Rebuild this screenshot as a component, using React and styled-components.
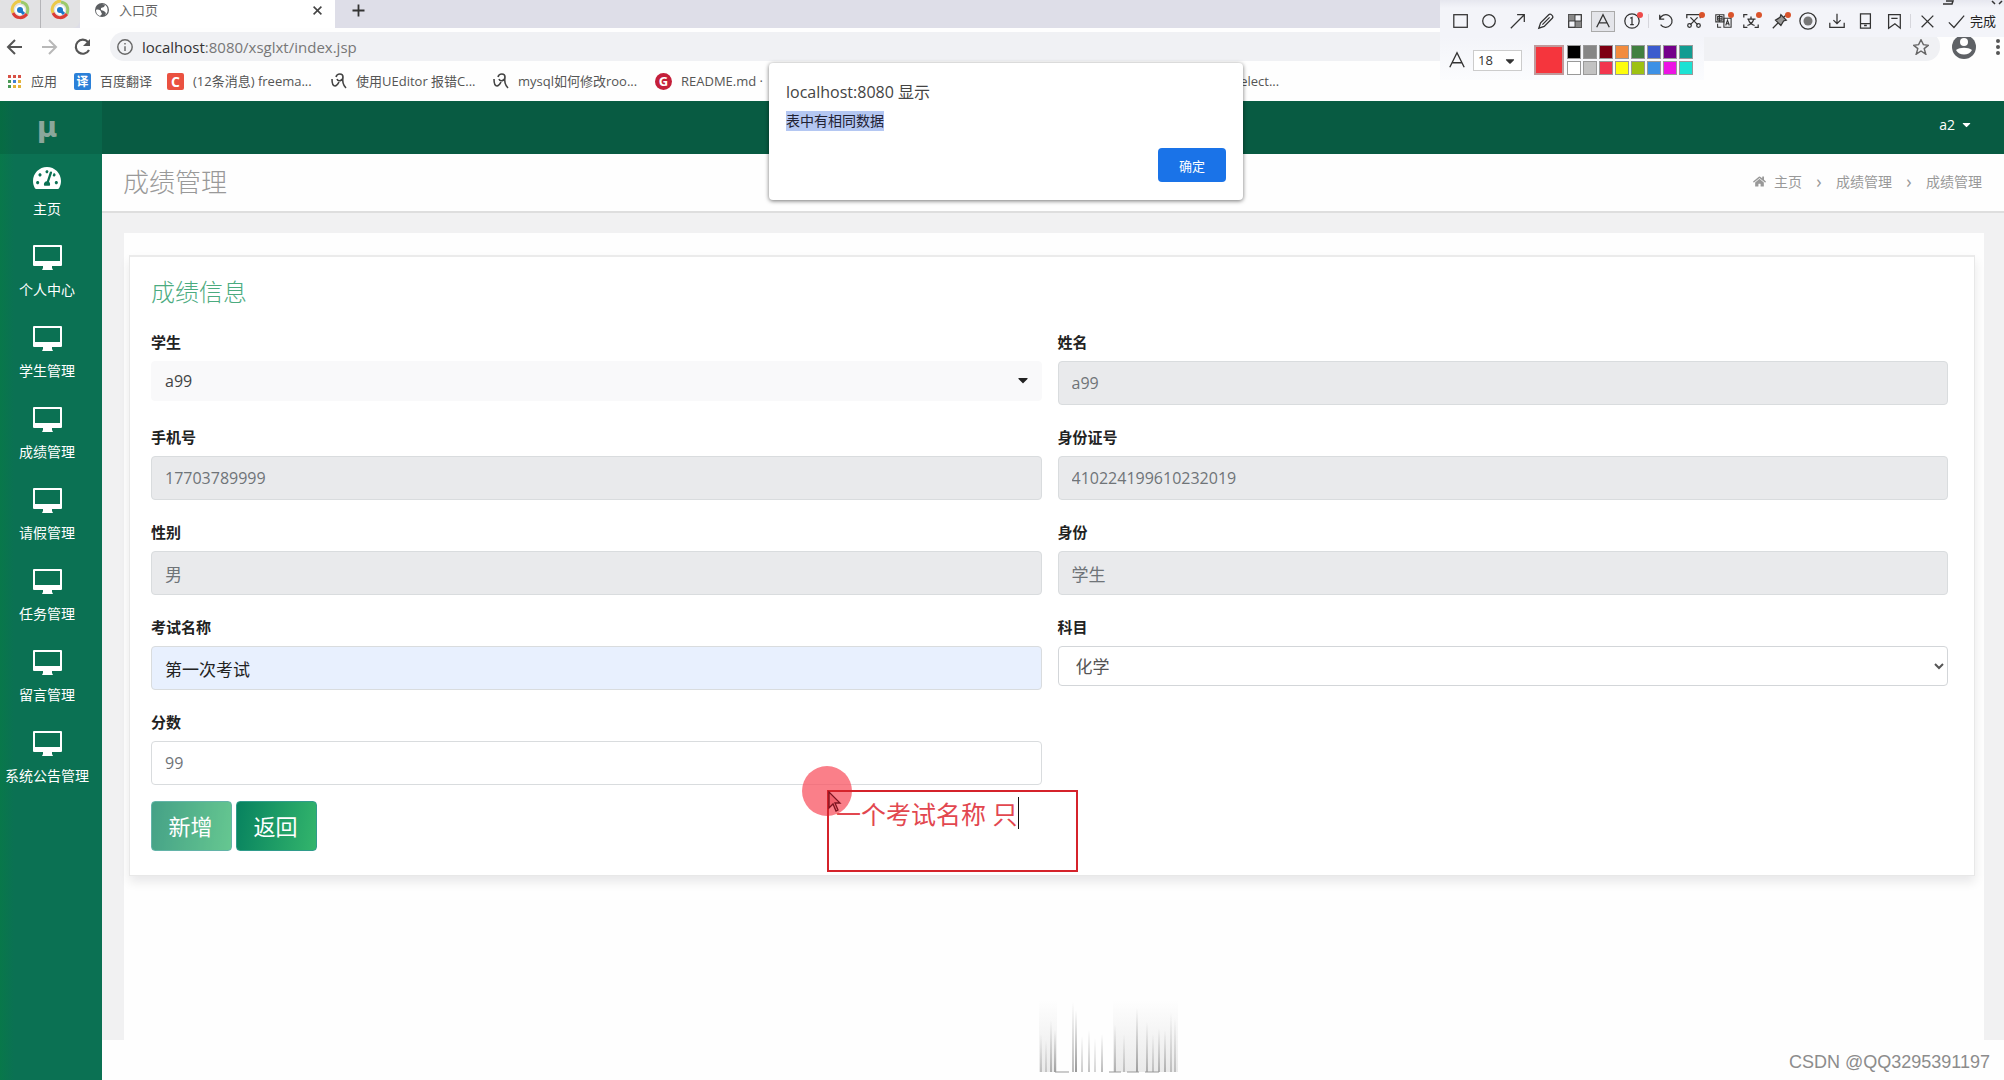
import styled, { createGlobalStyle } from "styled-components";
import { FaTachometerAlt, FaHome, FaCaretDown } from "react-icons/fa";

const GlobalStyle = createGlobalStyle`
  * {
    box-sizing: border-box;
  }
  body {
    margin: 0;
    background: #fefefe;
    font-family: "Open Sans", "Noto Sans CJK SC", sans-serif;
    font-size: 14px;
    color: #333;
  }
  button, input, select {
    font-family: inherit;
  }
  a {
    color: inherit;
    text-decoration: none;
  }
`;

const Page = styled.div`
  position: relative;
  min-height: 100vh;
  display: flex;
  flex-direction: column;
  overflow: hidden;
`;

/* browser */

const TabStrip = styled.div`
  height: 28px;
  display: flex;
  background: #dedee8;
`;

const PinnedTabs = styled.div`
  width: 80px;
  display: flex;
  background: #e2e2e4;
  border-radius: 0 0 8px 0;
`;

const PinnedTab = styled.button`
  flex: 1;
  border: 0;
  padding: 0 0 8px;
  background: none;
  display: flex;
  align-items: center;
  justify-content: center;
  & + & {
    border-left: 1px solid #b5b5b8;
  }
`;

const ActiveTab = styled.div`
  width: 255px;
  padding: 0 11px 8px 14px;
  display: flex;
  align-items: center;
  gap: 9px;
  background: #fff;
  font-size: 13px;
  line-height: 18px;
  color: #666;
`;

const TabTitle = styled.span`
  flex: 1;
`;

const IconButton = styled.button`
  border: 0;
  padding: 0;
  background: none;
  display: flex;
  align-items: center;
  justify-content: center;
`;

const NewTab = styled(IconButton)`
  width: 46px;
  padding-bottom: 8px;
`;

const AddressRow = styled.div`
  margin-top: 4px;
  height: 29px;
  display: flex;
  align-items: center;
  padding: 0 4px;
`;

const NavButtons = styled.div`
  display: flex;
  gap: 12px;
  width: 106px;
  button {
    width: 22px;
  }
`;

const AddressBar = styled.div`
  flex: 1;
  height: 29px;
  padding: 0 11px 0 7px;
  display: flex;
  align-items: center;
  gap: 9px;
  background: #f0f1f4;
  border-radius: 14px;
  font-size: 15px;
  line-height: 20px;
  color: #777;
  b {
    font-weight: 400;
    color: #333;
  }
`;

const Url = styled.span`
  flex: 1;
`;

const Profile = styled.div`
  width: 60px;
  display: flex;
  align-items: center;
  justify-content: flex-end;
  gap: 20px;
`;

const Bookmarks = styled.nav`
  height: 40px;
  padding-left: 7px;
  display: flex;
  align-items: center;
  white-space: nowrap;
  font-size: 13px;
  line-height: 20px;
  color: #555;
`;

const Bookmark = styled.a`
  width: ${(props) => props.$width}px;
  display: flex;
  align-items: center;
  gap: 9px;
`;

const BookmarkBadge = styled.span`
  width: 17px;
  height: 17px;
  border-radius: ${(props) => (props.$round ? "50%" : "2px")};
  background: ${(props) => props.$color};
  color: #fff;
  font-size: ${(props) => props.$size}px;
  font-weight: 700;
  line-height: 17px;
  text-align: center;
`;

/* capture tool panel */

const ToolPanel = styled.div`
  position: absolute;
  top: 0;
  right: 0;
  width: 564px;
`;

const WindowMarks = styled.svg`
  position: absolute;
  right: 0;
  top: 0;
`;

const ToolRow = styled.div`
  height: 37px;
  padding: 5px 8px 0 9px;
  display: flex;
  align-items: center;
  justify-content: space-between;
  background: linear-gradient(#e6e7ef, #f3f4f9 8px);
`;

const Tool = styled(IconButton)`
  position: relative;
  width: 24px;
  height: 21px;
  border: 1px solid ${(props) => (props.$active ? "#aaa" : "transparent")};
  background: ${(props) => (props.$active ? "#e4e5ea" : "none")};
`;

const Dot = styled.i`
  position: absolute;
  top: 0;
  right: 0;
  width: 6px;
  height: 6px;
  border-radius: 50%;
  background: ${(props) => props.$color};
`;

const ToolDivider = styled.span`
  width: 1px;
  height: 14px;
  background: #d6d6dc;
`;

const DoneButton = styled(IconButton)`
  gap: 5px;
  padding-left: 4px;
  font-size: 13px;
  line-height: 18px;
  color: #222;
`;

const OptionRow = styled.div`
  width: 264px;
  height: 43px;
  padding: 3px 8px 0;
  display: flex;
  align-items: center;
  background: linear-gradient(#f3f4f9, #fbfcfe);
`;

const SizeSelect = styled.label`
  position: relative;
  margin-left: 7px;
  svg {
    position: absolute;
    right: 5px;
    top: 4px;
  }
`;

const SizeInput = styled.select`
  appearance: none;
  width: 49px;
  height: 21px;
  padding: 0 4px;
  border: 1px solid #ccc;
  border-radius: 0;
  background: #fff;
  font-size: 13px;
  color: #333;
`;

const CurrentColor = styled.span`
  width: 30px;
  height: 30px;
  margin: 0 3px 0 12px;
  border: 2px solid #c09a9c;
  background: #f5353d;
`;

const Palette = styled.div`
  display: grid;
  grid-template-columns: repeat(8, 14px);
  gap: 2px;
`;

const Swatch = styled.button`
  width: 14px;
  height: 14px;
  padding: 0;
  border: 1px solid #999;
  background: ${(props) => props.$color};
`;

/* alert */

const Alert = styled.div`
  position: absolute;
  top: 63px;
  left: 50%;
  width: 474px;
  height: 137px;
  margin-left: -233px;
  padding: 17px;
  display: flex;
  flex-direction: column;
  align-items: flex-start;
  background: #fff;
  border-radius: 4px;
  box-shadow: 0 1px 4px rgba(0, 0, 0, 0.55);
`;

const AlertTitle = styled.h2`
  margin: 0;
  font-size: 16px;
  font-weight: 400;
  line-height: 24px;
  color: #444;
`;

const AlertText = styled.p`
  margin: 7px 0 17px;
  background: #b4c7f2;
  font-size: 14px;
  line-height: 20px;
  color: #223;
`;

const AlertButton = styled.button`
  align-self: flex-end;
  width: 68px;
  height: 34px;
  border: 0;
  border-radius: 4px;
  background: #1a73e8;
  color: #fff;
  font-size: 13px;
`;

/* app */

const AppBody = styled.div`
  flex: 1;
  display: flex;
`;

const Sidebar = styled.aside`
  width: 102px;
  background: linear-gradient(90deg, #08784a, #0b7153 14%);
`;

const Logo = styled.a`
  height: 53px;
  display: flex;
  align-items: center;
  justify-content: center;
  padding-right: 8px;
  background: rgba(0, 50, 30, 0.16);
  color: #8ba79b;
  font: 700 28px "DejaVu Sans", sans-serif;
`;

const SideLink = styled.a`
  height: 81px;
  padding: 10px 8px 0 0;
  display: flex;
  flex-direction: column;
  align-items: center;
  gap: 7px;
  color: #fff;
  font-size: 14px;
  line-height: 20px;
  white-space: nowrap;
`;

const Main = styled.main`
  flex: 1;
  display: flex;
  flex-direction: column;
`;

const Header = styled.header`
  height: 53px;
  padding: 0 31px;
  display: flex;
  align-items: center;
  justify-content: flex-end;
  background: #085b42;
`;

const UserMenu = styled(IconButton)`
  gap: 5px;
  padding-bottom: 7px;
  color: #fff;
  font-size: 14px;
`;

const TitleBar = styled.div`
  height: 59px;
  padding: 0 22px 3px 21px;
  display: flex;
  align-items: center;
  justify-content: space-between;
  border-bottom: 2px solid #dedede;
`;

const Title = styled.h1`
  margin: 0;
  color: #999;
  font-size: 26px;
  font-weight: 300;
`;

const Crumbs = styled.nav`
  display: flex;
  align-items: center;
  color: #999;
  font-size: 14px;
`;

const Crumb = styled.a`
  display: flex;
  align-items: center;
  gap: 8px;
  & + &::before {
    content: "›";
    width: 34px;
    margin-right: -8px;
    text-align: center;
    font-size: 18px;
  }
`;

const Content = styled.div`
  flex: 1;
  margin-bottom: 40px;
  padding: 20px 20px 0 22px;
  background: #f1f1f2;
`;

const Sheet = styled.div`
  height: 100%;
  padding: 22px 9px 22px 5px;
  background: #fefefe;
`;

const Card = styled.form`
  padding: 20px 26px 24px 21px;
  border: 1px solid #e8e8e8;
  border-top: 2px solid #ebebeb;
  background: #fff;
  box-shadow: 0 6px 10px rgba(0, 0, 20, 0.09);
`;

const CardTitle = styled.h3`
  margin: 0 0 24px;
  color: #4bab7f;
  font-size: 24px;
  font-weight: 300;
  line-height: 30px;
`;

const Fields = styled.div`
  display: grid;
  grid-template-columns: 1fr 1fr;
  grid-auto-rows: 74px;
  gap: 21px 16px;
`;

const Field = styled.div`
  position: relative;
  display: flex;
  flex-direction: column;
  > svg {
    position: absolute;
    right: 11px;
    top: 41px;
  }
`;

const Label = styled.label`
  margin-bottom: 8px;
  color: #222;
  font-size: 15px;
  font-weight: 700;
  line-height: 22px;
`;

const TextInput = styled.input`
  height: 44px;
  padding: 0 13px;
  border: 1px solid #d9dcde;
  border-radius: 4px;
  background: ${(props) => (props.readOnly ? "#e9eaec" : props.$filled ? "#e8f0fe" : "#fff")};
  color: ${(props) => (props.$filled ? "#222" : "#6f7478")};
  font-size: ${(props) => (props.$numeric ? 16 : 17)}px;
`;

const Select = styled.select`
  height: 40px;
  padding: 0 13px;
  border: 1px solid #d3d6d9;
  border-radius: 4px;
  background: #fff;
  color: #555;
  font-size: 17px;
`;

const PlainSelect = styled(Select)`
  appearance: none;
  border-color: #f9f9fa;
  background: #f9f9fa;
  color: #444;
  font-size: 16px;
`;

const Actions = styled.div`
  display: flex;
  gap: 4px;
  margin-top: 16px;
`;

const ActionButton = styled.button`
  width: 81px;
  height: 50px;
  padding: 0 2px 2px 0;
  border: 1px solid #2f9c8b;
  border-radius: 4px;
  background: linear-gradient(100deg, #07825f, #33b56c);
  color: #fff;
  font-size: 22px;
  opacity: ${(props) => (props.$faded ? 0.75 : 1)};
`;

/* drawn over the page */

const Spot = styled.div`
  position: absolute;
  left: 802px;
  top: 766px;
  width: 50px;
  height: 50px;
  border-radius: 50%;
  background: rgba(248, 84, 98, 0.75);
`;

const Note = styled.div`
  position: absolute;
  left: 827px;
  top: 790px;
  width: 251px;
  height: 82px;
  padding: 5px 7px;
  border: 2px solid #d5232b;
  display: flex;
  color: #e2474f;
  font-size: 25px;
  line-height: 34px;
  white-space: pre;
`;

const NoteCaret = styled.span`
  width: 1px;
  height: 32px;
  background: #111;
`;

const Pointer = styled.svg`
  position: absolute;
  left: 827px;
  top: 790px;
`;

const Stripes = styled.svg`
  position: absolute;
  left: 1039px;
  top: 1000px;
`;

const Watermark = styled.span`
  position: absolute;
  right: 14px;
  bottom: 7px;
  color: #8c8c8c;
  font: 18px/22px "Liberation Sans", sans-serif;
`;

const menu = ["个人中心", "学生管理", "成绩管理", "请假管理", "任务管理", "留言管理", "系统公告管理"];

const palette = [
  "#000", "#868686", "#7e0013", "#f28b3d", "#418040", "#3b5bce", "#74008a", "#129c92",
  "#fff", "#c2c2c2", "#f2364f", "#fdfd0c", "#9dc112", "#3c90e6", "#ec13e4", "#1be2d4",
];

const stripes = [
  [1, 34, 0.3], [6, 40, 0.25], [11, 20, 0.4], [15, 30, 0.5], [33, 2, 0.4], [36, 10, 0.6],
  [42, 36, 0.3], [49, 30, 0.35], [55, 38, 0.25], [62, 34, 0.4], [75, 24, 0.4], [84, 34, 0.3],
  [97, 8, 0.5], [107, 22, 0.4], [113, 34, 0.3], [119, 28, 0.4], [125, 30, 0.4], [131, 12, 0.3],
  [135, 18, 0.3],
];

const tools = [
  { name: "矩形", shape: <rect x="2" y="3" width="15" height="14" /> },
  { name: "椭圆", shape: <circle cx="10" cy="10" r="7" /> },
  { name: "箭头", shape: <path d="M2 18 17 3M9 3h8v8" /> },
  {
    name: "画笔",
    shape: <path d="M2 18l2-6 9-9c2-2 6 2 4 4l-9 9zM6 14l8-8" />,
  },
  {
    name: "马赛克",
    shape: (
      <>
        <rect x="3" y="3" width="14" height="14" />
        <path d="M3 3h7v7H3zM10 10h7v7h-7z" fill="#888" stroke="none" />
        <path d="M10 3v14M3 10h14" strokeWidth="1" />
      </>
    ),
  },
  { name: "文字", active: true, shape: <path d="M3 17 10 3l7 14M6 12h8" /> },
  {
    name: "序号",
    dot: "#ee4a4a",
    shape: (
      <>
        <circle cx="10" cy="10" r="8" />
        <path d="M8 7l2-1v8M8 14h4" />
      </>
    ),
  },
  null,
  { name: "撤销", shape: <path d="M3 3v5h5M3 8a7 7 0 1 1 1 6" /> },
  {
    name: "裁剪",
    dot: "#d9532b",
    shape: (
      <>
        <path d="M2 7V3h15v4M6 6l8 8M14 6l-8 8" />
        <circle cx="5" cy="15" r="2" />
        <circle cx="15" cy="15" r="2" />
      </>
    ),
  },
  {
    name: "翻译",
    dot: "#d9532b",
    shape: (
      <g strokeWidth="1.2">
        <path d="M2 3h9v8H2zM4 5h5v4H4zM4 7h5M6 3v8M4 13v4h4" />
        <path d="M11 7h8v10h-8zM13 15l2-6 2 6M14 13h3" />
      </g>
    ),
  },
  {
    name: "识别",
    dot: "#d9532b",
    shape: <path d="M2 6V3h4M2 14v3h4M18 14v3h-4M6 8h9M10 5v3M13 8c-1 4-4 6-7 7M7 8c1 4 4 6 7 7" />,
  },
  {
    name: "钉住",
    dot: "#d9532b",
    shape: <path d="M11 3l6 6-3 1-3 5-6-6 5-3zM8 12l-6 6M14 6l3-3" fill="#999" />,
  },
  {
    name: "录制",
    shape: (
      <>
        <circle cx="10" cy="10" r="9" />
        <circle cx="10" cy="10" r="5" fill="#777" stroke="none" />
      </>
    ),
  },
  { name: "下载", shape: <path d="M10 2v11M6 9l4 4 4-4M2 12v5h16v-5" /> },
  { name: "手机", shape: <path d="M5 2h11v16H5zM5 13h11M9 15h3" /> },
  { name: "收藏", shape: <path d="M4 3h13v15l-6-5-7 5zM7 7h7" /> },
  null,
  { name: "关闭", shape: <path d="M4 4l13 13M17 4 4 17" /> },
];

const Stroke = ({ size = 20, width = 1.5, color = "#333", children }) => (
  <svg width={size} height={size} viewBox="0 0 20 20" fill="none" stroke={color} strokeWidth={width}>
    {children}
  </svg>
);

const Monitor = () => (
  <svg width="29" height="28" viewBox="0 0 29 28" fill="currentColor">
    <path
      fillRule="evenodd"
      d="M1 0h27a1 1 0 0 1 1 1v19a1 1 0 0 1-1 1h-9v2l1 2H9l1-2v-2H1a1 1 0 0 1-1-1V1a1 1 0 0 1 1-1zm1 2v14h25V2z"
    />
  </svg>
);

const Swirl = () => (
  <svg width="20" height="20" viewBox="0 0 20 20" fill="none" strokeWidth="3">
    <path d="M3 13C0 6 6 1 11 1" stroke="#ecc94a" />
    <path d="M11 2c6 1 8 6 6 12" stroke="#9cc96a" />
    <path d="M3 13c3 6 10 6 14 1" stroke="#dc3d35" />
    <circle cx="10" cy="10" r="5" fill="#fff" />
    <circle cx="10" cy="10" r="3" fill="#1b77c9" />
    <path d="M10 10l4 4" stroke="#1b77c9" />
  </svg>
);

const Globe = () => (
  <svg width="16" height="16" viewBox="0 0 16 16">
    <circle cx="8" cy="8" r="7" fill="#5c5f62" />
    <path d="M2 8c2-1 5 0 5 2l1 2-2 2c-3-1-4-3-4-6zM8 2l3 1-1 2-3 1v2l3 1 2 2-1 2c3-2 3-5 2-8-1-2-3-3-5-3z" fill="#fff" />
  </svg>
);

const Squiggle = () => (
  <svg width="16" height="16" viewBox="0 0 16 16" fill="none" stroke="#444" strokeWidth="1.6">
    <path d="M1 6c0 5 1 7 3 7s3-2 4-4M5 4c1-4 7-4 7 0s-5 5-6 2M12 4c-1 5 0 8 3 11" />
  </svg>
);

const Apps = () => (
  <svg width="15" height="15" viewBox="0 0 15 15">
    {["#d85145", "#d85145", "#d85145", "#4b9a56", "#3f7fd6", "#e3b33a", "#4b9a56", "#e3b33a", "#e3b33a"].map(
      (color, i) => (
        <rect key={i} x={(i % 3) * 5 + 1} y={Math.floor(i / 3) * 5 + 1} width="3" height="3" fill={color} />
      )
    )}
  </svg>
);

const Browser = () => (
  <div>
    <TabStrip>
      <PinnedTabs>
        <PinnedTab aria-label="标签一">
          <Swirl />
        </PinnedTab>
        <PinnedTab aria-label="标签二">
          <Swirl />
        </PinnedTab>
      </PinnedTabs>
      <ActiveTab>
        <Globe />
        <TabTitle>入口页</TabTitle>
        <IconButton aria-label="关闭标签">
          <Stroke size={13} width={2.4} color="#444">
            <path d="M4 4l12 12M16 4 4 16" />
          </Stroke>
        </IconButton>
      </ActiveTab>
      <NewTab aria-label="新标签">
        <Stroke size={15} width={2.4}>
          <path d="M10 2v16M2 10h16" />
        </Stroke>
      </NewTab>
    </TabStrip>
    <AddressRow>
      <NavButtons>
        <IconButton aria-label="后退">
          <Stroke width={2} color="#555">
            <path d="M17 10H4M10 3l-7 7 7 7" />
          </Stroke>
        </IconButton>
        <IconButton aria-label="前进">
          <Stroke width={2} color="#b8b8b8">
            <path d="M3 10h13M10 3l7 7-7 7" />
          </Stroke>
        </IconButton>
        <IconButton aria-label="刷新">
          <Stroke width={2.2} color="#555">
            <path d="M16 13a7 7 0 1 1-1-8" />
            <path d="M17 2v7h-7z" fill="#555" stroke="none" />
          </Stroke>
        </IconButton>
      </NavButtons>
      <AddressBar>
        <Stroke size={16} width={1.8} color="#666">
          <circle cx="10" cy="10" r="9" />
          <path d="M10 9v6M10 5v2" />
        </Stroke>
        <Url>
          <b>localhost</b>:8080/xsglxt/index.jsp
        </Url>
        <Stroke size={16} width={1.8} color="#666">
          <path d="M10 1l3 6 6 1-5 4 2 7-6-4-6 4 2-7-5-4 6-1z" />
        </Stroke>
      </AddressBar>
      <Profile>
        <svg width="24" height="24" viewBox="0 0 24 24">
          <circle cx="12" cy="12" r="12" fill="#5f6266" />
          <circle cx="12" cy="7" r="4" fill="#fff" />
          <path d="M4 15c4-3 12-3 16 0-3 6-13 6-16 0z" fill="#fff" />
        </svg>
        <svg width="4" height="16" viewBox="0 0 4 16" fill="#555">
          <circle cx="2" cy="2" r="2" />
          <circle cx="2" cy="8" r="2" />
          <circle cx="2" cy="14" r="2" />
        </svg>
      </Profile>
    </AddressRow>
    <Bookmarks>
      <Bookmark href="#" $width={67}>
        <Apps />
        应用
      </Bookmark>
      <Bookmark href="#" $width={93}>
        <BookmarkBadge $color="#2b80d8" $size={12}>译</BookmarkBadge>
        百度翻译
      </Bookmark>
      <Bookmark href="#" $width={164}>
        <BookmarkBadge $color="#ea5140" $size={14}>C</BookmarkBadge>
        (12条消息) freema...
      </Bookmark>
      <Bookmark href="#" $width={162}>
        <Squiggle />
        使用UEditor 报错C...
      </Bookmark>
      <Bookmark href="#" $width={162}>
        <Squiggle />
        mysql如何修改roo...
      </Bookmark>
      <Bookmark href="#" $width={579}>
        <BookmarkBadge $round $color="#c41f3a" $size={13}>G</BookmarkBadge>
        README.md ·
      </Bookmark>
      <a href="#">select...</a>
    </Bookmarks>
  </div>
);

const CapturePanel = () => (
  <ToolPanel>
    <ToolRow>
      {tools.map((tool, i) =>
        tool ? (
          <Tool key={i} $active={tool.active} aria-label={tool.name}>
            <Stroke size={18} width={1.4}>{tool.shape}</Stroke>
            {tool.dot && <Dot $color={tool.dot} />}
          </Tool>
        ) : (
          <ToolDivider key={i} />
        )
      )}
      <DoneButton>
        <Stroke size={17}>
          <path d="M1 11l6 6L19 3" />
        </Stroke>
        完成
      </DoneButton>
    </ToolRow>
    <OptionRow>
      <Stroke size={18}>
        <path d="M2 18 10 2l8 16M5 13h10" />
      </Stroke>
      <SizeSelect aria-label="字号">
        <SizeInput defaultValue="18">
          <option>18</option>
        </SizeInput>
        <FaCaretDown size={14} color="#333" />
      </SizeSelect>
      <CurrentColor />
      <Palette>
        {palette.map((color) => (
          <Swatch key={color} $color={color} aria-label={color} />
        ))}
      </Palette>
    </OptionRow>
    <WindowMarks width="64" height="5" viewBox="0 0 64 5" fill="none" stroke="#333" strokeWidth="1.5">
      <path d="M3 4h9l1-3H6M52 1l3 3M62 1l-3 3" />
    </WindowMarks>
  </ToolPanel>
);

const Input = ({ id, label, ...rest }) => (
  <Field>
    <Label htmlFor={id}>{label}</Label>
    <TextInput id={id} {...rest} />
  </Field>
);

const ScoreForm = () => (
  <Card onSubmit={(e) => e.preventDefault()}>
    <CardTitle>成绩信息</CardTitle>
    <Fields>
      <Field>
        <Label htmlFor="student">学生</Label>
        <PlainSelect id="student">
          <option>a99</option>
        </PlainSelect>
        <FaCaretDown size={16} color="#222" />
      </Field>
      <Input id="name" label="姓名" defaultValue="a99" readOnly $numeric />
      <Input id="phone" label="手机号" defaultValue="17703789999" readOnly $numeric />
      <Input id="card" label="身份证号" defaultValue="410224199610232019" readOnly $numeric />
      <Input id="sex" label="性别" defaultValue="男" readOnly />
      <Input id="role" label="身份" defaultValue="学生" readOnly />
      <Input id="exam" label="考试名称" defaultValue="第一次考试" $filled />
      <Field>
        <Label htmlFor="subject">科目</Label>
        <Select id="subject">
          <option>化学</option>
        </Select>
      </Field>
      <Input id="score" label="分数" defaultValue="99" $numeric />
    </Fields>
    <Actions>
      <ActionButton type="submit" $faded>
        新增
      </ActionButton>
      <ActionButton type="button">返回</ActionButton>
    </Actions>
  </Card>
);

const App = () => (
  <Page>
    <GlobalStyle />
    <Browser />
    <AppBody>
      <Sidebar>
        <Logo href="#">μ</Logo>
        <SideLink href="#">
          <FaTachometerAlt size={28} />
          主页
        </SideLink>
        {menu.map((item) => (
          <SideLink href="#" key={item}>
            <Monitor />
            {item}
          </SideLink>
        ))}
      </Sidebar>
      <Main>
        <Header>
          <UserMenu>
            a2
            <FaCaretDown size={13} />
          </UserMenu>
        </Header>
        <TitleBar>
          <Title>成绩管理</Title>
          <Crumbs>
            <Crumb href="#">
              <FaHome size={13} />
              主页
            </Crumb>
            <Crumb href="#">成绩管理</Crumb>
            <Crumb href="#">成绩管理</Crumb>
          </Crumbs>
        </TitleBar>
        <Content>
          <Sheet>
            <ScoreForm />
          </Sheet>
        </Content>
      </Main>
    </AppBody>
    <CapturePanel />
    <Alert role="dialog">
      <AlertTitle>localhost:8080 显示</AlertTitle>
      <AlertText>表中有相同数据</AlertText>
      <AlertButton>确定</AlertButton>
    </Alert>
    <Spot />
    <Note>
      一个考试名称 只
      <NoteCaret />
    </Note>
    <Pointer width="16" height="24" viewBox="0 0 16 24" fill="#f0606c" stroke="#7c1420" strokeWidth="1.3">
      <path d="M2 2v16l4-4 3 7 2-1-3-7h5z" />
    </Pointer>
    <Stripes width="140" height="73" viewBox="0 0 140 73">
      <defs>
        <linearGradient id="fade" x1="0" y1="0" x2="0" y2="1">
          <stop offset="0" stopColor="#555" stopOpacity="0" />
          <stop offset="1" stopColor="#555" />
        </linearGradient>
      </defs>
      <rect width="18" height="72" fill="url(#fade)" opacity="0.12" />
      <rect x="74" width="65" height="72" fill="url(#fade)" opacity="0.12" />
      {stripes.map(([x, y, opacity]) => (
        <rect key={x} x={x} y={y} width="2" height={72 - y} fill="url(#fade)" opacity={opacity} />
      ))}
      <path d="M16 72h14M70 72h12M88 72h12M106 72h14" stroke="#999" />
    </Stripes>
    <Watermark>CSDN @QQ3295391197</Watermark>
  </Page>
);

export default App;
